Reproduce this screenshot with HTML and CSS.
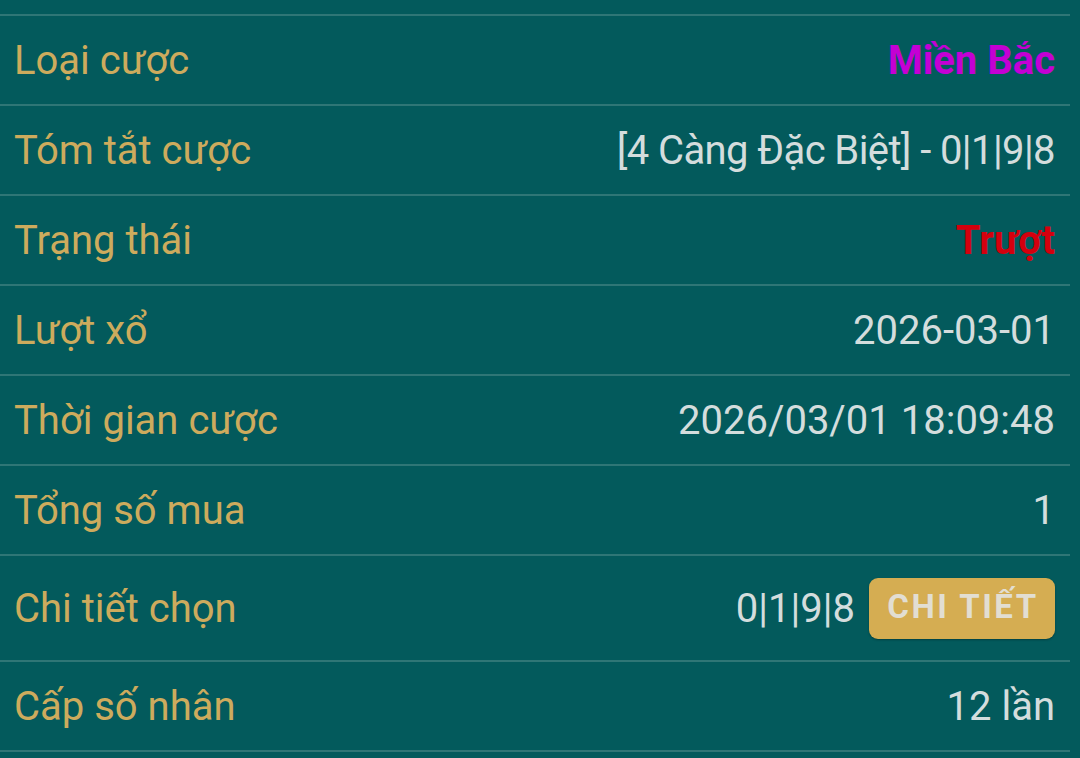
FILE: index.html
```html
<!DOCTYPE html>
<html lang="vi">
<head>
<meta charset="utf-8">
<link rel="stylesheet" href="styles.css">
</head>
<body>
<div class="list">
  <div class="row"><span class="label">Loại cược</span><span class="value magenta">Miền Bắc</span></div>
  <div class="row"><span class="label">Tóm tắt cược</span><span class="value tight">[4 Càng Đặc Biệt] - 0|1|9|8</span></div>
  <div class="row"><span class="label">Trạng thái</span><span class="value red">Trượt</span></div>
  <div class="row"><span class="label">Lượt xổ</span><span class="value">2026-03-01</span></div>
  <div class="row"><span class="label">Thời gian cược</span><span class="value">2026/03/01 18:09:48</span></div>
  <div class="row"><span class="label">Tổng số mua</span><span class="value">1</span></div>
  <div class="row row-tall"><span class="label">Chi tiết chọn</span><span class="value with-btn">0|1|9|8<button class="btn">CHI TIẾT</button></span></div>
  <div class="row"><span class="label">Cấp số nhân</span><span class="value">12 lần</span></div>
</div>
</body>
</html>
```
FILE: styles.css
```css
html, body {
  margin: 0;
  padding: 0;
  background: #035a5c;
  width: 1080px;
  height: 758px;
  overflow: hidden;
}
body {
  font-family: Roboto, "Noto Sans", sans-serif;
}
.list {
  margin-top: 14px;
  margin-right: 10px;
  border-top: 2px solid #2f7676;
}
.row {
  display: flex;
  align-items: center;
  justify-content: space-between;
  height: 88px;
  padding: 0 15px 0 14px;
  border-bottom: 2px solid #2f7676;
}
.row-tall {
  height: 104px;
}
.label {
  color: #cdab5d;
  font-size: 40px;
}
.value {
  color: #d4dddd;
  font-size: 40px;
}
.tight {
  letter-spacing: -0.6px;
}
.magenta {
  color: #c400d4;
  font-weight: bold;
}
.red {
  color: #d4000e;
  font-weight: bold;
}
.with-btn {
  display: flex;
  align-items: center;
  gap: 14px;
}
.btn {
  font-family: Roboto, "Noto Sans", sans-serif;
  font-size: 33px;
  font-weight: bold;
  color: #e2ded2;
  background: #d5ad52;
  border: none;
  border-radius: 9px;
  width: 186px;
  height: 61px;
  padding: 0 0 4px 2px;
  letter-spacing: 2.5px;
  box-shadow: 0 1px 2px rgba(0,0,0,0.3);
}
```
